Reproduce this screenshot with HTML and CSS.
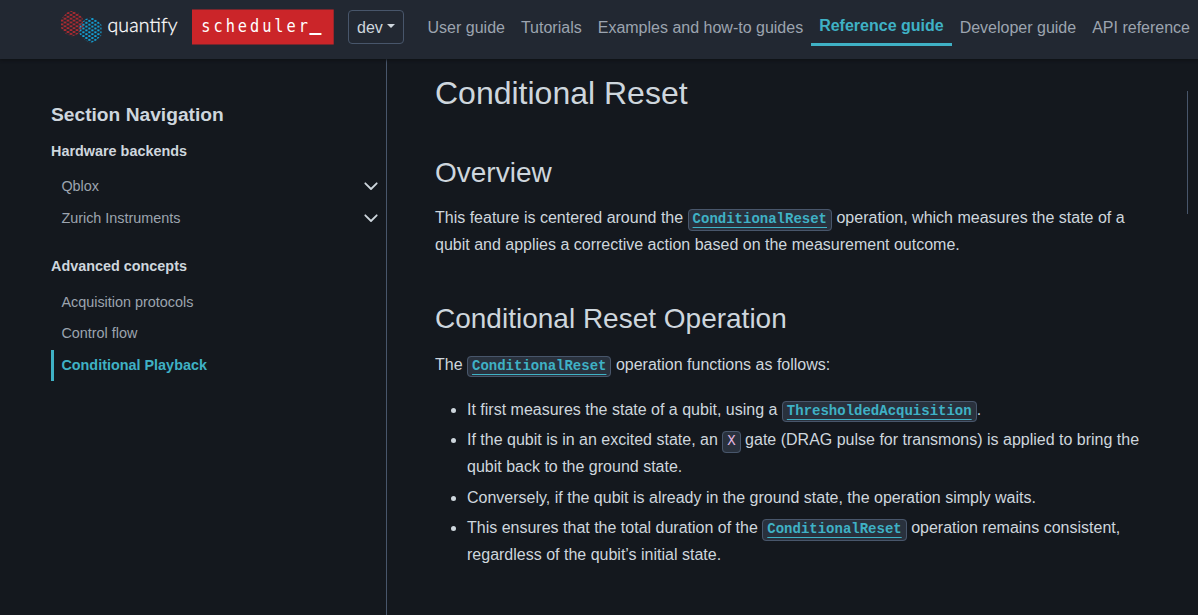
FILE: index.html
```html
<!DOCTYPE html>
<html lang="en">
<head>
<meta charset="utf-8">
<title>Conditional Reset</title>
<link rel="stylesheet" href="styles.css">
</head>
<body>
<header class="header">
  <a class="logo"><svg width="274" height="40" viewBox="60 7 274 40">
    <defs>
      <pattern id="red" width="6" height="3.8" x="60.6" y="12" patternUnits="userSpaceOnUse"><rect x=".3" y=".1" width="2.2" height="1.8" fill="#cf2a30"/><rect x="3.3" y="2" width="2.2" height="1.8" fill="#cf2a30"/></pattern>
      <pattern id="blue" width="6" height="3.8" x="79" y="18" patternUnits="userSpaceOnUse"><rect x=".3" y=".1" width="2.2" height="1.8" fill="#12a5dc"/><rect x="3.3" y="2" width="2.2" height="1.8" fill="#12a5dc"/></pattern>
    </defs>
    <path d="M67 12.5 72 11 78 12.5 82.5 18 83.5 27 78 34 72 36.5 66 34 61 28V19z" fill="url(#red)"/>
    <path d="M85.5 19 91 17.5 96.5 19 101.5 25V35L96.5 40.5 91 43 85.5 40.5 79.5 34V25z" fill="url(#blue)"/>
    <text class="brand" x="107.5" y="31.5" textLength="70">quantify</text>
    <rect x="192" y="9.5" width="141.7" height="35" fill="#cb2529"/>
    <text class="product" transform="translate(201.3 31.5) scale(.9 1)">scheduler<tspan class="cursor" x="120.2" dy="-1.5">_</tspan></text>
  </svg></a>
  <button class="version">dev<span class="caret"></span></button>
  <nav class="topnav">
    <a>User guide</a><a>Tutorials</a><a>Examples and how-to guides</a><a class="current">Reference guide</a><a>Developer guide</a><a>API reference</a>
  </nav>
</header>
<div class="page">
  <aside class="sidebar">
    <p class="side-title">Section Navigation</p>
    <p class="caption">Hardware backends</p>
    <ul class="side-list">
      <li><a>Qblox</a><svg class="chev" width="14" height="9" viewBox="0 0 14 9"><path d="M1.3 1.3 7 7l5.7-5.7"/></svg></li>
      <li><a>Zurich Instruments</a><svg class="chev" width="14" height="9" viewBox="0 0 14 9"><path d="M1.3 1.3 7 7l5.7-5.7"/></svg></li>
    </ul>
    <p class="caption">Advanced concepts</p>
    <ul class="side-list">
      <li><a>Acquisition protocols</a></li>
      <li><a>Control flow</a></li>
      <li class="active"><a>Conditional Playback</a></li>
    </ul>
  </aside>
  <main class="article">
    <h1>Conditional Reset</h1>
    <h2>Overview</h2>
    <p>This feature is centered around the <a class="ref"><code>ConditionalReset</code></a> operation, which measures the state of a qubit and applies a corrective action based on the measurement outcome.</p>
    <h2>Conditional Reset Operation</h2>
    <p>The <a class="ref"><code>ConditionalReset</code></a> operation functions as follows:</p>
    <ul>
      <li>It first measures the state of a qubit, using a <a class="ref"><code>ThresholdedAcquisition</code></a>.</li>
      <li>If the qubit is in an excited state, an <code>X</code> gate (DRAG pulse for transmons) is applied to bring the qubit back to the ground state.</li>
      <li>Conversely, if the qubit is already in the ground state, the operation simply waits.</li>
      <li>This ensures that the total duration of the <a class="ref"><code>ConditionalReset</code></a> operation remains consistent, regardless of the qubit’s initial state.</li>
    </ul>
  </main>
  <div class="toc"></div>
</div>
</body>
</html>
```
FILE: styles.css
```css
* { box-sizing: border-box; }
body {
  margin: 0;
  height: 615px;
  overflow: hidden;
  background: #14181e;
  color: #ced6dd;
  font: 16px/27px "Liberation Sans", Arial, sans-serif;
}
.header {
  display: flex;
  align-items: center;
  height: 59px;
  padding: 0 0 5px 60px;
  background: #222832;
  box-shadow: 0 1px 3px #0e1014;
  position: relative;
  white-space: nowrap;
}
.logo { display: flex; }
.brand { font: 300 19.5px Lato, sans-serif; fill: #fff; stroke: #fff; stroke-width: .3; }
.product { font: 17px "DejaVu Sans Mono", monospace; letter-spacing: 3.3px; fill: #fff; }
.cursor { font-size: 22px; font-weight: 700; }
.version {
  display: flex;
  align-items: center;
  gap: 4px;
  width: 56px;
  height: 34px;
  margin-left: 14px;
  padding: 1px 8px 0;
  border: 1px solid #48566b;
  border-radius: 4px;
  background: none;
  color: #ced6dd;
  font: 16px "Liberation Sans", sans-serif;
}
.caret { margin-top: -3px; border: 4.5px solid transparent; border-top-color: #ced6dd; border-bottom: 0; }
.topnav { display: flex; margin-left: 15.6px; color: #9ca4af; line-height: 24px; }
.topnav a { padding: 9px 8px 7px; }
.topnav .current { margin-bottom: 1px; padding: 7px 8px 8px; color: #3fb1c5; font-weight: 600; box-shadow: inset 0 -3px #3fb1c5; }
.page { display: flex; height: 556px; }
.sidebar { width: 387px; flex: none; padding: 43px 0 0 51px; border-right: 1px solid #48566b; }
.side-title { margin: 0 0 12px; font-size: 19.2px; line-height: 26px; font-weight: 600; }
.caption { margin: 0; font-size: 14.4px; line-height: 22px; font-weight: 600; }
.side-list { list-style: none; margin: 9px 0 20.7px; padding: 0; }
.caption ~ .caption + .side-list { margin-top: 9.5px; }
.side-list li { display: flex; align-items: center; justify-content: space-between; height: 31.6px; padding: 0 8px 0 10.4px; font-size: 14.4px; color: #9ca4af; }
.side-list .active { color: #3fb1c5; font-weight: 600; box-shadow: inset 3px 0 #3fb1c5; }
.chev { fill: none; stroke: #ced6dd; stroke-width: 1.8; stroke-linecap: round; stroke-linejoin: round; }
.article { width: 800px; flex: none; padding: 16px 32px 0 48px; }
h1, h2 { font-weight: 400; }
h1 { margin: 0 0 44px; font-size: 32px; line-height: 37px; }
h2 { margin: 0 0 14.4px; font-size: 28px; line-height: 34px; }
p { margin: 0 0 18.4px; }
.article p + h2 { margin: 43.6px 0 15px; }
.article p:has(+ ul) { margin-bottom: 17.8px; }
.article ul { margin: 0; padding-left: 32px; }
.article li { margin-bottom: 3.5px; }
code {
  padding: 1px 4px 2.4px;
  border: 1px solid #48566b;
  border-radius: 4px;
  background: #29313d;
  color: #e6b9e2;
  font: 14px/20px "Liberation Mono", monospace;
}
.ref code { color: #3fb1c5; font-weight: 600; text-decoration: underline; text-decoration-thickness: 1px; text-underline-offset: 3.5px; }
.toc { width: 1px; flex: none; height: 123px; margin-top: 32px; background: #48566b; }
```
